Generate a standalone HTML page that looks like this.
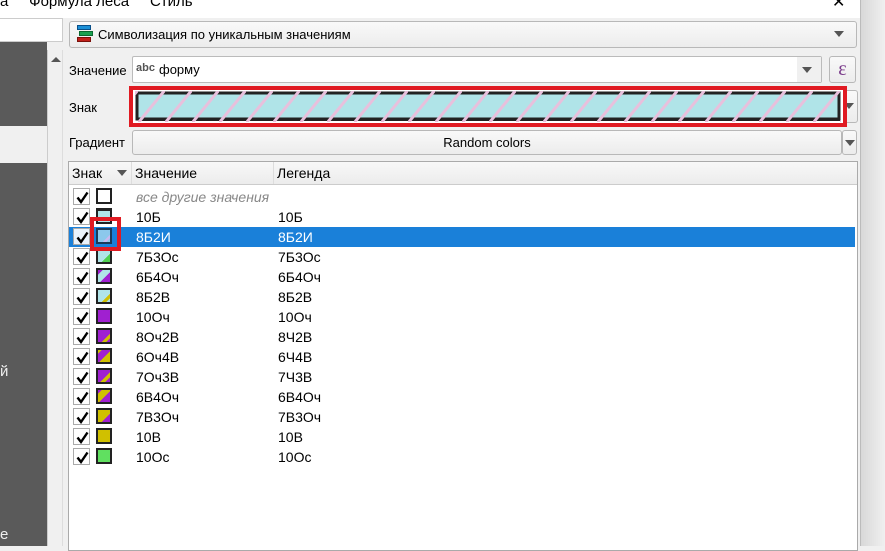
<!DOCTYPE html>
<html><head><meta charset="utf-8"><style>
*{box-sizing:border-box;margin:0;padding:0}
body{width:885px;height:546px;overflow:hidden;background:#f0f0f0;font-family:"Liberation Sans","DejaVu Sans",sans-serif;font-size:13px;color:#000;position:relative}
.a{position:absolute}
.btn{background:linear-gradient(#f9f9f9,#ececec);border:1px solid #b8b8b8;border-radius:3px}
.tri{width:0;height:0;border-left:5px solid transparent;border-right:5px solid transparent;border-top:6px solid #555}
.row{position:absolute;left:69px;width:786px;height:20px}
.cb{position:absolute;left:4px;top:1px;width:17px;height:17px;border:1px solid #aaa;background:#fff}
.cb svg{position:absolute;left:2px;top:2px}
.sw{position:absolute;left:27px;top:1px;width:16px;height:16px;border:2px solid #222}
.v{position:absolute;left:67px;top:2px;font-size:14px}
.l{position:absolute;left:209px;top:2px;font-size:14px}
</style></head><body>
<div class="a" style="left:0;top:0;width:885px;height:18px;background:#fff"></div>
<div class="a" style="left:0;top:-7px;font-size:15px;white-space:pre">а     Формула леса     Стиль</div>
<div class="a" style="left:832px;top:-8px;font-size:16px">✕</div>
<div class="a" style="left:0;top:18px;width:63px;height:24px;background:#fff;border:1px solid #ccc;border-left:none"></div>
<div class="a" style="left:0;top:42px;width:47px;height:504px;background:#5a5a5a"></div>
<div class="a" style="left:0;top:126px;width:47px;height:37px;background:#f0f0f0"></div>
<div class="a" style="left:0;top:363px;color:#eee;font-size:15px">й</div>
<div class="a" style="left:0;top:526px;color:#eee;font-size:15px">е</div>
<div class="a" style="left:47px;top:50px;width:16px;height:496px;background:#f0f0f0;border-left:1px solid #ccc;border-right:1px solid #ddd"></div>
<div class="a tri" style="left:51px;top:57px;border-top:none;border-bottom:5px solid #555"></div>
<div class="a" style="left:860px;top:0;width:25px;height:546px;background:linear-gradient(90deg,#d8d8d8,#f0f0f0);border-left:1px solid #bbb"></div>
<div class="a btn" style="left:69px;top:21px;width:788px;height:27px"></div>
<svg class="a" style="left:77px;top:25px" width="16" height="18"><rect x="0.5" y="0.5" width="13" height="4" fill="#1b8fd6" stroke="#0a4f88"/><rect x="2.5" y="6.5" width="13" height="4" fill="#1aa050" stroke="#0a6a30"/><rect x="0.5" y="12.5" width="13" height="4" fill="#c0201a" stroke="#7a100a"/></svg>
<div class="a" style="left:98px;top:27px">Символизация по уникальным значениям</div>
<div class="a tri" style="left:834px;top:31px"></div>
<div class="a" style="left:69px;top:63px">Значение</div>
<div class="a" style="left:132px;top:56px;width:690px;height:27px;background:#fff;border:1px solid #bbb;border-radius:2px"></div>
<div class="a" style="left:797px;top:57px;width:24px;height:25px;background:#f0f0f0"></div>
<div class="a tri" style="left:802px;top:67px"></div>
<div class="a" style="left:136px;top:62px;font-size:11px;font-weight:bold;color:#555">abc</div>
<div class="a" style="left:159px;top:62px">форму</div>
<div class="a btn" style="left:829px;top:56px;width:27px;height:27px;text-align:center;color:#7a3a8a;font-size:20px;line-height:24px;font-family:'Liberation Serif',serif">ε</div>
<div class="a" style="left:69px;top:100px">Знак</div>
<div class="a btn" style="left:838px;top:90px;width:20px;height:33px"></div>
<div class="a tri" style="left:844px;top:103px"></div>
<div class="a" style="left:129px;top:86px;width:718px;height:41px;border:4px solid #e01a22;background:#fff"></div>
<svg class="a" style="left:133px;top:90px" width="710" height="33">
<defs><pattern id="p" width="27" height="33" patternUnits="userSpaceOnUse" x="5"><line x1="0" y1="33" x2="27" y2="0" stroke="#e8c0dc" stroke-width="3"/></pattern></defs>
<rect x="4" y="3" width="702" height="26" fill="#b0e4e8" stroke="#222" stroke-width="3"/>
<line x1="706" y1="5" x2="706" y2="30" stroke="#222" stroke-width="2"/>
<line x1="5" y1="30" x2="707" y2="30" stroke="#222" stroke-width="2"/>
<rect x="2" y="1" width="706" height="31" fill="url(#p)"/>
</svg>
<div class="a" style="left:69px;top:135px">Градиент</div>
<div class="a btn" style="left:132px;top:130px;width:710px;height:25px;text-align:center;line-height:23px">Random colors</div>
<div class="a btn" style="left:842px;top:130px;width:15px;height:25px"></div>
<div class="a tri" style="left:845px;top:140px"></div>
<div class="a" style="left:68px;top:161px;width:790px;height:390px;background:#fff;border:1px solid #aaa"></div>
<div class="a" style="left:69px;top:162px;width:788px;height:23px;background:linear-gradient(#f8f8f8,#ececec);border-bottom:1px solid #ccc"></div>
<div class="a" style="left:72px;top:165px;font-size:14px">Знак</div>
<div class="a tri" style="left:117px;top:170px"></div>
<div class="a" style="left:131px;top:162px;width:1px;height:22px;background:#ddd"></div>
<div class="a" style="left:135px;top:165px;font-size:14px">Значение</div>
<div class="a" style="left:273px;top:162px;width:1px;height:22px;background:#ddd"></div>
<div class="a" style="left:277px;top:165px;font-size:14px">Легенда</div>

<svg width="0" height="0" style="position:absolute"><defs><path id="ck" d="M1.5 6.5 L5 11 L11.5 1.5" fill="none" stroke="#000" stroke-width="2.4" stroke-linejoin="miter"/></defs></svg>

<div class="row" style="top:187px"><div class="cb"><svg width="13" height="13"><use href="#ck"/></svg></div><div class="sw" style="background:#fff"></div><div class="v" style="color:#888;font-style:italic">все другие значения</div></div>
<div class="row" style="top:207px"><div class="cb"><svg width="13" height="13"><use href="#ck"/></svg></div><div class="sw" style="background:#b0e4e8;border-top-width:3px"></div><div class="v">10Б</div><div class="l">10Б</div></div>
<div class="row" style="top:227px;background:#1a80d9;color:#fff"><div class="cb" style="background:#eaf3fc"><svg width="13" height="13"><use href="#ck"/></svg></div><div class="sw" style="background:linear-gradient(135deg,#8cc8ec 70%,#c8b8f0 70% 85%,#8cc8ec 85%);border-color:#1a3a5a"></div><div class="v">8Б2И</div><div class="l">8Б2И</div></div>
<div class="row" style="top:247px"><div class="cb"><svg width="13" height="13"><use href="#ck"/></svg></div><div class="sw" style="background:linear-gradient(135deg,#b0e4e8 65%,#50d050 65%)"></div><div class="v">7Б3Ос</div><div class="l">7Б3Ос</div></div>
<div class="row" style="top:267px"><div class="cb"><svg width="13" height="13"><use href="#ck"/></svg></div><div class="sw" style="background:linear-gradient(135deg,#a020d0 20%,#b0e4e8 20% 60%,#a020d0 60%)"></div><div class="v">6Б4Оч</div><div class="l">6Б4Оч</div></div>
<div class="row" style="top:287px"><div class="cb"><svg width="13" height="13"><use href="#ck"/></svg></div><div class="sw" style="background:linear-gradient(135deg,#b0e4e8 65%,#d0c000 65% 85%,#b0e4e8 85%)"></div><div class="v">8Б2В</div><div class="l">8Б2В</div></div>
<div class="row" style="top:307px"><div class="cb"><svg width="13" height="13"><use href="#ck"/></svg></div><div class="sw" style="background:#a020d0"></div><div class="v">10Оч</div><div class="l">10Оч</div></div>
<div class="row" style="top:327px"><div class="cb"><svg width="13" height="13"><use href="#ck"/></svg></div><div class="sw" style="background:linear-gradient(135deg,#a020d0 65%,#d0c000 65% 85%,#a020d0 85%)"></div><div class="v">8Оч2В</div><div class="l">8Ч2В</div></div>
<div class="row" style="top:347px"><div class="cb"><svg width="13" height="13"><use href="#ck"/></svg></div><div class="sw" style="background:linear-gradient(135deg,#d0c000 15%,#a020d0 15% 55%,#d0c000 55%)"></div><div class="v">6Оч4В</div><div class="l">6Ч4В</div></div>
<div class="row" style="top:367px"><div class="cb"><svg width="13" height="13"><use href="#ck"/></svg></div><div class="sw" style="background:linear-gradient(135deg,#a020d0 60%,#d0c000 60% 80%,#a020d0 80%)"></div><div class="v">7Оч3В</div><div class="l">7Ч3В</div></div>
<div class="row" style="top:387px"><div class="cb"><svg width="13" height="13"><use href="#ck"/></svg></div><div class="sw" style="background:linear-gradient(135deg,#a020d0 15%,#d0c000 15% 55%,#a020d0 55%)"></div><div class="v">6В4Оч</div><div class="l">6В4Оч</div></div>
<div class="row" style="top:407px"><div class="cb"><svg width="13" height="13"><use href="#ck"/></svg></div><div class="sw" style="background:linear-gradient(135deg,#d0c000 65%,#a020d0 65%)"></div><div class="v">7В3Оч</div><div class="l">7В3Оч</div></div>
<div class="row" style="top:427px"><div class="cb"><svg width="13" height="13"><use href="#ck"/></svg></div><div class="sw" style="background:#d0c000"></div><div class="v">10В</div><div class="l">10В</div></div>
<div class="row" style="top:447px"><div class="cb"><svg width="13" height="13"><use href="#ck"/></svg></div><div class="sw" style="background:#60e060"></div><div class="v">10Ос</div><div class="l">10Ос</div></div>
<div class="a" style="left:90px;top:217px;width:31px;height:34px;border:4px solid #e01a22"></div>
</body></html>
